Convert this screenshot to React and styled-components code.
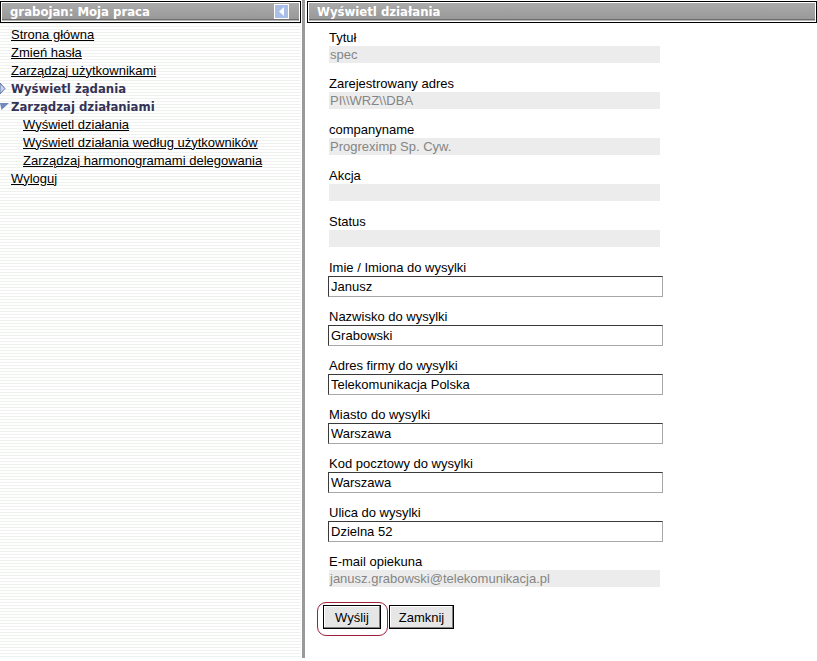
import React from "react";
import styled, { createGlobalStyle } from "styled-components";

const Global = createGlobalStyle`
  html, body { margin: 0; padding: 0; background: #fff; }
  body { font-family: "Liberation Sans", Arial, sans-serif; font-size: 12px; color: #000; }
`;

const menu = [
    { label: "Strona główna", level: 0 },
    { label: "Zmień hasła", level: 0 },
    { label: "Zarządzaj użytkownikami", level: 0 },
    { label: "Wyświetl żądania", level: 0, bold: true, icon: "right" },
    { label: "Zarządzaj działaniami", level: 0, bold: true, icon: "down" },
    { label: "Wyświetl działania", level: 1 },
    { label: "Wyświetl działania według użytkowników", level: 1 },
    { label: "Zarządzaj harmonogramami delegowania", level: 1 },
    { label: "Wyloguj", level: 0 },
];

const readonlyFields = [
    { label: "Tytuł", value: "spec" },
    { label: "Zarejestrowany adres", value: "PI\\\\WRZ\\\\DBA" },
    { label: "companyname", value: "Progreximp Sp. Cyw." },
    { label: "Akcja", value: "" },
    { label: "Status", value: "" },
];

const inputFields = [
    { label: "Imie / Imiona do wysylki", value: "Janusz" },
    { label: "Nazwisko do wysylki", value: "Grabowski" },
    { label: "Adres firmy do wysylki", value: "Telekomunikacja Polska" },
    { label: "Miasto do wysylki", value: "Warszawa" },
    { label: "Kod pocztowy do wysylki", value: "Warszawa" },
    { label: "Ulica do wysylki", value: "Dzielna 52" },
];

function Arrow({ dir }) {
    if (dir === "right") {
        return (
            <svg width="6" height="11" viewBox="0 0 6 11">
                <path d="M0 0 L5 5.5 L0 11 Z" fill="#c8d4ec" stroke="#5a6fa8" strokeWidth="1" />
            </svg>
        );
    }
    return (
        <svg width="9" height="7" viewBox="0 0 9 7">
            <path d="M0 0 L9 0 L1.5 7 Z" fill="#7088c0" />
        </svg>
    );
}

function App() {
    return (
        <Page>
            <Global />
            <Sidebar>
                <Header>
                    <HeaderText>grabojan: Moja praca</HeaderText>
                    <Collapse>
                        <svg width="7" height="9" viewBox="0 0 7 9">
                            <path d="M6 0 L1 4.5 L6 9 Z" fill="#fff" />
                        </svg>
                    </Collapse>
                </Header>
                <Menu>
                    {menu.map((m) => (
                        <Item key={m.label} level={m.level}>
                            <Marker>{m.icon && <Arrow dir={m.icon} />}</Marker>
                            {m.bold ? <Strong>{m.label}</Strong> : <Link>{m.label}</Link>}
                        </Item>
                    ))}
                </Menu>
            </Sidebar>
            <Divider />
            <Main>
                <Header>
                    <HeaderText>Wyświetl działania</HeaderText>
                </Header>
                <Form>
                    {readonlyFields.map((f) => (
                        <Field key={f.label}>
                            <Label>{f.label}</Label>
                            <Value>{f.value}</Value>
                        </Field>
                    ))}
                    {inputFields.map((f) => (
                        <Field key={f.label} wide>
                            <Label>{f.label}</Label>
                            <Input defaultValue={f.value} />
                        </Field>
                    ))}
                    <Field>
                        <Label>E-mail opiekuna</Label>
                        <Value>janusz.grabowski@telekomunikacja.pl</Value>
                    </Field>
                    <Buttons>
                        <Highlight>
                            <Button style={{ width: 58 }}>Wyślij</Button>
                        </Highlight>
                        <Button style={{ width: 65 }}>Zamknij</Button>
                    </Buttons>
                </Form>
            </Main>
        </Page>
    );
}

export default App;

const Page = styled.div`
    display: flex;
    height: 661px;
    width: 817px;
    overflow: hidden;
`
const Sidebar = styled.div`
    width: 301px;
    flex-shrink: 0;
    height: 658px;
    background: repeating-linear-gradient(to bottom, #ffffff 0px, #ffffff 2px, #eff1ef 2px, #eff1ef 3px);
`
const Divider = styled.div`
    width: 3px;
    margin: 0 2px 0 1px;
    background: #9a9a9a;
    height: 658px;
`
const Main = styled.div`
    flex: 1;
    min-width: 0;
`
const Header = styled.div`
    margin-top: 1px;
    height: 20px;
    border: 1px solid #000;
    box-shadow: inset 0 0 0 1px #fff;
    background: linear-gradient(to bottom, #acacac, #999999 85%, #6e6e6e 86%, #6e6e6e 92%, #ffffff 93%);
    display: flex;
    align-items: center;
    justify-content: space-between;
    padding: 0 11px 0 9px;
`
const HeaderText = styled.span`
    color: #fff;
    font-weight: bold;
    font-size: 13px;
    font-family: "DejaVu Sans Condensed", "Liberation Sans", sans-serif;
    line-height: 20px;
`
const Collapse = styled.span`
    width: 13px;
    height: 13px;
    border: 1px solid #fff;
    background: #a9bfe6;
    display: flex;
    align-items: center;
    justify-content: center;
    margin-top: -1px;
`
const Menu = styled.div`
    padding-top: 2px;
`
const Item = styled.div`
    display: flex;
    align-items: center;
    height: 18px;
    padding-left: ${(props) => props.level * 12}px;
`
const Marker = styled.span`
    width: 11px;
    flex-shrink: 0;
    display: flex;
    align-items: center;
`
const Link = styled.a`
    color: #000;
    text-decoration: underline;
    font-size: 13px;
    cursor: pointer;
`
const Strong = styled.span`
    color: #333355;
    font-weight: bold;
    font-size: 13px;
    font-family: "DejaVu Sans Condensed", "Liberation Sans", sans-serif;
`
const Form = styled.div`
    padding: 7px 0 0 22px;
`
const Field = styled.div`
    margin-bottom: ${(props) => (props.wide ? 12 : 13)}px;
`
const Label = styled.div`
    line-height: 15px;
    font-size: 13px;
    margin-bottom: 1px;
`
const Value = styled.div`
    width: 330px;
    height: 17px;
    line-height: 17px;
    background: #ececec;
    color: #858585;
    font-size: 13px;
    padding-left: 1px;
`
const Input = styled.input`
    display: block;
    box-sizing: border-box;
    margin-left: -1px;
    width: 335px;
    height: 21px;
    border: 1px solid #a8a8a8;
    border-top-color: #3a3a3a;
    border-left-color: #3a3a3a;
    font-family: "Liberation Sans", Arial, sans-serif;
    font-size: 13px;
    padding: 0 2px;
    color: #000;
    outline: none;
`
const Buttons = styled.div`
    display: flex;
    align-items: flex-start;
    margin-top: 15px;
    margin-left: -12px;
    gap: 1px;
`
const Highlight = styled.span`
    display: inline-flex;
    border: 1px solid #a0203a;
    border-radius: 9px;
    padding: 2px 6px 6px 5px;
`
const Button = styled.button`
    box-sizing: border-box;
    height: 24px;
    border: 1px solid #000;
    box-shadow: inset -1px -1px 0 #808080, inset 1px 1px 0 #fff;
    background: #e6e6e6;
    font-family: "Liberation Sans", Arial, sans-serif;
    font-size: 13px;
    color: #000;
    padding: 0;
    margin-top: 3px;
    &:first-child { margin-top: 0; }
`
